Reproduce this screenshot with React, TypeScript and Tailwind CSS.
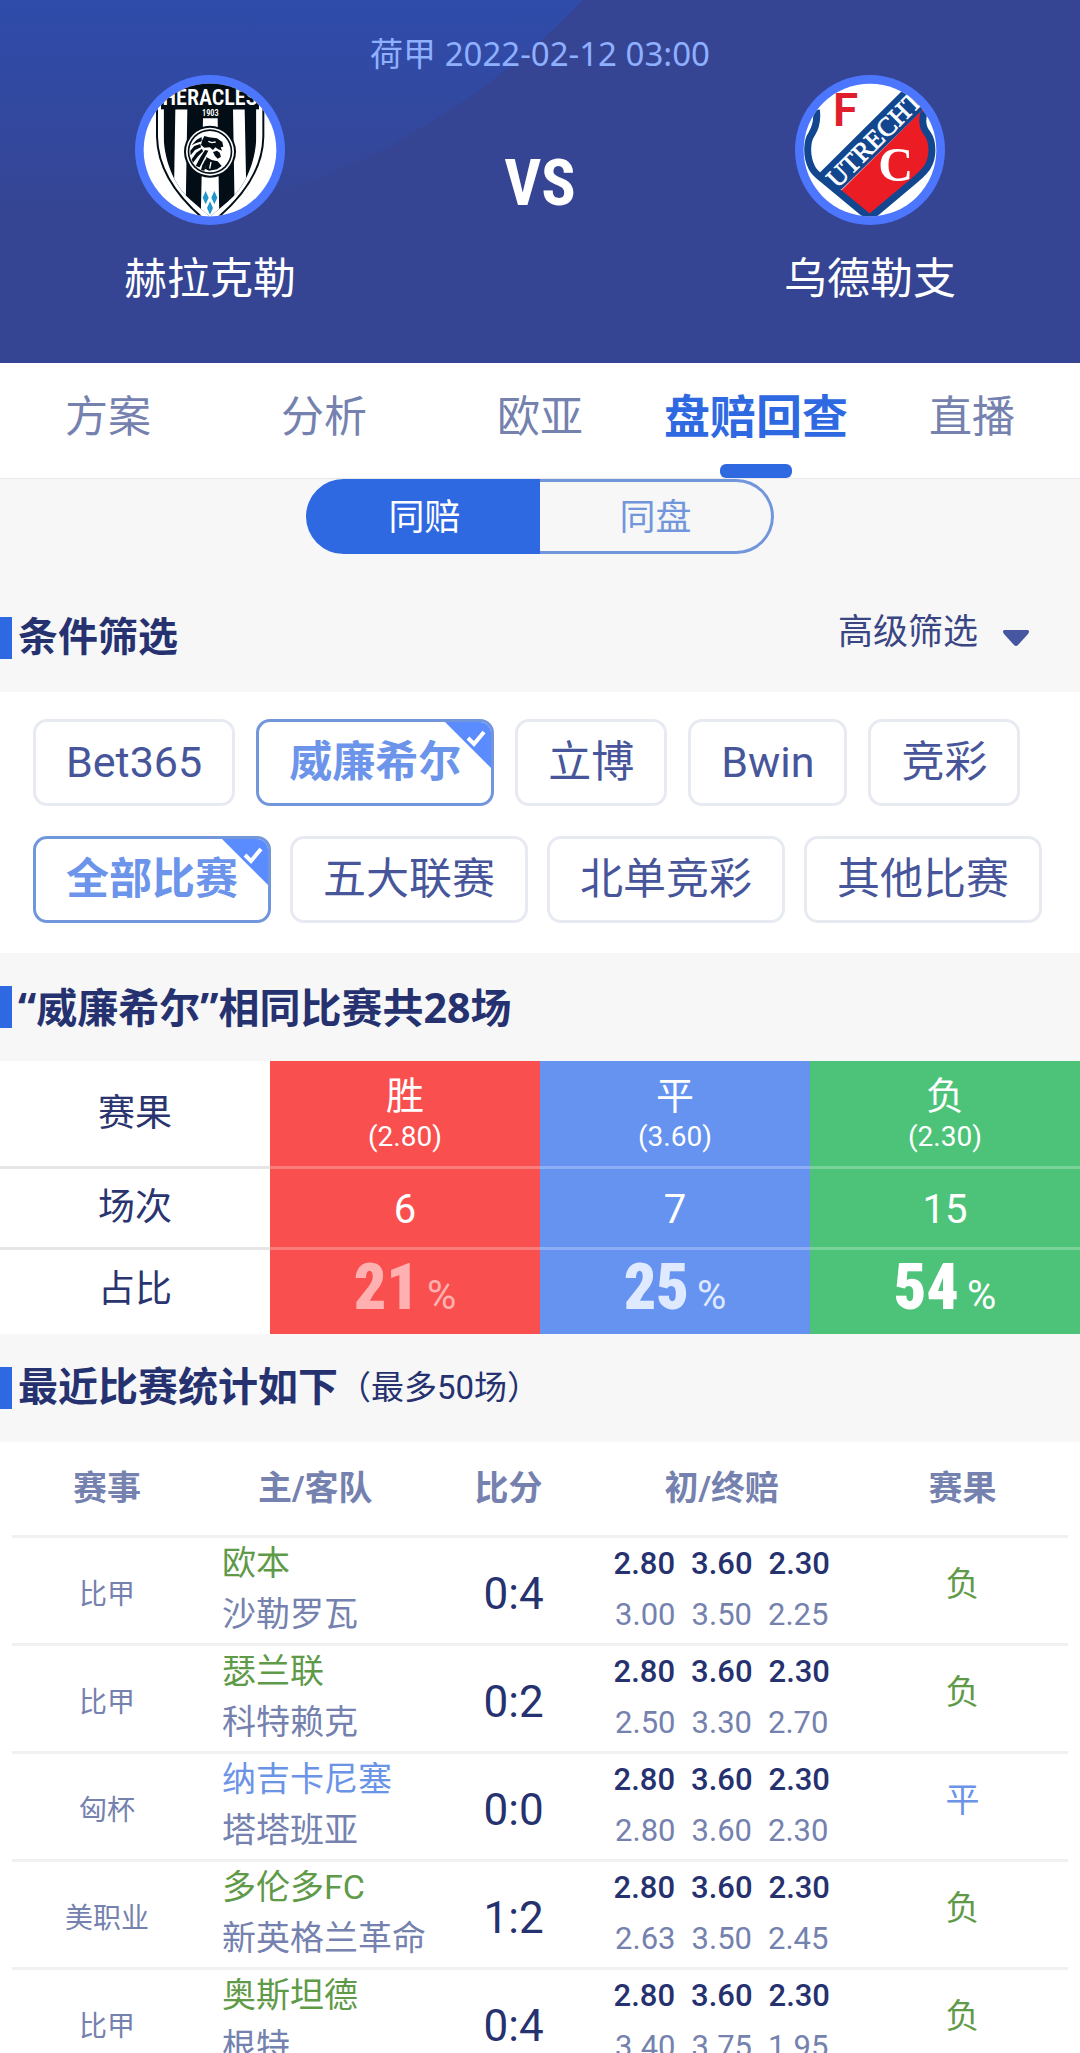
/**
 * MatchOddsScreen — odds lookup tab of the match detail page.
 *
 *   [ header: league / kick-off, two teams    ]
 *   [ tabs                                    ]
 *   [ same odds | same handicap               ]
 *   [ filters                                 ]
 *   [ summary table                           ]
 *   [ recent matches table                    ]
 */
import { useState } from 'react';
import clsx from 'clsx';

const TABS = ['方案', '分析', '欧亚', '盘赔回查', '直播'];
const MODES = ['同赔', '同盘'];
const BOOKMAKERS = ['Bet365', '威廉希尔', '立博', 'Bwin', '竞彩'];
const SCOPES = ['全部比赛', '五大联赛', '北单竞彩', '其他比赛'];

type Result = '胜' | '平' | '负';

const RESULT_COLOR: Record<Result, string> = {
  胜: 'text-[#f9504f]',
  平: 'text-[#6b94e6]',
  负: 'text-[#5f9a48]',
};

const SUMMARY = [
  { name: '胜', odds: '(2.80)', count: 6, rate: 21, bg: 'bg-[#f9504f]', tone: 'text-[#ffb1b1]' },
  { name: '平', odds: '(3.60)', count: 7, rate: 25, bg: 'bg-[#6793f0]', tone: 'text-[#dfe9ff]' },
  { name: '负', odds: '(2.30)', count: 15, rate: 54, bg: 'bg-[#4dc379]', tone: 'text-white' },
];

interface Match {
  league: string;
  home: string;
  away: string;
  score: string;
  first: string[];
  last: string[];
  result: Result;
}

const OPENING = ['2.80', '3.60', '2.30'];

const MATCHES: Match[] = [
  { league: '比甲', home: '欧本', away: '沙勒罗瓦', score: '0:4', first: OPENING, last: ['3.00', '3.50', '2.25'], result: '负' },
  { league: '比甲', home: '瑟兰联', away: '科特赖克', score: '0:2', first: OPENING, last: ['2.50', '3.30', '2.70'], result: '负' },
  { league: '匈杯', home: '纳吉卡尼塞', away: '塔塔班亚', score: '0:0', first: OPENING, last: ['2.80', '3.60', '2.30'], result: '平' },
  { league: '美职业', home: '多伦多FC', away: '新英格兰革命', score: '1:2', first: OPENING, last: ['2.63', '3.50', '2.45'], result: '负' },
  { league: '比甲', home: '奥斯坦德', away: '根特', score: '0:4', first: OPENING, last: ['3.40', '3.75', '1.95'], result: '负' },
];

function HeraclesLogo() {
  return (
    <svg viewBox="42 45 450 450" className="size-[150px]" aria-hidden="true">
      <defs>
        <clipPath id="heracles-round">
          <circle cx="267" cy="270" r="199" />
        </clipPath>
        <clipPath id="heracles-shield">
          <path d="M128 60V230C130 310 165 385 215 425L267 470L320 425C370 385 404 310 406 230V60Z" />
        </clipPath>
      </defs>
      <circle cx="267" cy="270" r="225" fill="#4d76ff" />
      <g clipPath="url(#heracles-round)">
        <rect x="42" y="45" width="450" height="450" fill="#fff" />
        <path d="M108 60V230C110 330 170 410 246 475H288C365 410 425 330 427 230V60Z" fill="#fff" stroke="#020d16" strokeWidth="6" />
        <g clipPath="url(#heracles-shield)">
          <rect x="100" y="45" width="330" height="440" fill="#020d16" />
          <path d="M163 148H199L194 450H158ZM336 148H371L377 450H341ZM246 175H290L295 480H239Z" fill="#fff" />
        </g>
        <rect x="120" y="60" width="294" height="88" fill="#020d16" />
        <text x="267" y="134" textAnchor="middle" fill="#fff" fontSize="66" fontWeight="600" fontFamily="'Liberation Sans Narrow', 'Roboto Condensed', Roboto, sans-serif">
          HERACLES
        </text>
        <text x="268" y="167" textAnchor="middle" fill="#fff" fontSize="25" fontWeight="600" fontFamily="'Liberation Sans Narrow', 'Roboto Condensed', Roboto, sans-serif">
          1903
        </text>
        <circle cx="267" cy="275" r="78" fill="#020d16" />
        <circle cx="267" cy="275" r="72" fill="#fff" />
        <circle cx="267" cy="275" r="67" fill="#020d16" />
        <circle cx="267" cy="275" r="62" fill="#fff" />
        <g fill="#020d16">
          <path d="M244 240L250 228L264 232L288 235L304 246L307 260L299 262L303 272L292 268L283 262L276 270L266 262L250 263L240 255Z" />
          <path d="M276 276L288 272L296 278L300 290L290 296L282 288Z" />
          <path d="M256 291L272 300L290 304L302 318L288 328L264 332L252 326Z" />
          <path d="M242 231L226 240L212 256L224 250L242 244Z" />
          <path d="M238 252L220 258L208 272L209 286L222 270L240 262Z" />
          <path d="M243 266L226 278L212 298L216 308L232 288L246 274Z" />
          <path d="M252 270L238 292L224 318L236 322L246 302L262 272Z" />
          <path d="M254 296L244 316L240 330L250 332L256 312Z" />
        </g>
        <path d="M262 244L272 248L284 246M270 306L266 326" fill="none" stroke="#fff" strokeWidth="4" />
        <path d="M254 393L263 413L254 433L245 413ZM280 393L289 413L280 433L271 413ZM267 424L276 444L267 464L258 444Z" fill="#2196cc" />
      </g>
    </svg>
  );
}

function UtrechtLogo() {
  return (
    <svg viewBox="48 45 450 450" className="size-[150px]" aria-hidden="true">
      <defs>
        <clipPath id="utrecht-round">
          <circle cx="273" cy="270" r="199" />
        </clipPath>
        <clipPath id="utrecht-shield">
          <path d="M112 40V140C114 175 112 200 98 222C86 240 82 290 98 322C106 340 125 352 140 365L272 472L410 358C425 345 437 335 446 320C464 290 460 240 446 222C432 205 426 185 438 150V40Z" />
        </clipPath>
      </defs>
      <circle cx="273" cy="270" r="225" fill="#4d76ff" />
      <g clipPath="url(#utrecht-round)">
        <rect x="48" y="45" width="450" height="450" fill="#fff" />
        <g clipPath="url(#utrecht-shield)">
          <path d="M180 398L450 130V500H272Z" fill="#ec1c24" />
          <path d="M110 350L400 62L480 102L188 388L150 400Z" fill="#12468f" />
        </g>
        <path d="M112 150C116 180 112 200 98 222C82 245 82 290 98 322C106 340 125 352 140 365L272 474L410 358C425 345 437 335 446 320C464 290 462 245 446 222C432 205 426 185 436 156" fill="none" stroke="#12468f" strokeWidth="21" />
        <text x="0" y="0" transform="translate(175 387) rotate(-45)" fill="#fff" fontSize="80" fontWeight="400" stroke="#fff" strokeWidth="2" fontFamily="'Liberation Serif', serif">
          UTRECHT
        </text>
        <text x="160" y="197" fill="#e01f2d" fontSize="139" fontWeight="700" fontFamily="Lato, sans-serif">
          F
        </text>
        <text x="298" y="362" fill="#fff" fontSize="145" fontWeight="700" fontFamily="'Liberation Serif', serif">
          C
        </text>
      </g>
    </svg>
  );
}

function Team({ name, logo }: { name: string; logo: React.ReactNode }) {
  return (
    <div className="flex flex-1 flex-col items-center">
      {logo}
      <span className="mt-[22px] text-[43px] leading-[64px] text-white">{name}</span>
    </div>
  );
}

function MatchHeader() {
  return (
    <header className="relative overflow-hidden bg-[#354594] pt-8 pb-[52px]">
      <svg className="absolute top-0 left-0 h-[240px] w-[800px]" viewBox="0 0 800 240" aria-hidden="true">
        <defs>
          <linearGradient id="header-glow" gradientUnits="userSpaceOnUse" x1="0" y1="0" x2="0" y2="210">
            <stop offset="0" stopColor="#2f4cab" />
            <stop offset="1" stopColor="#354594" />
          </linearGradient>
        </defs>
        <circle cx="43" cy="-515" r="746" fill="url(#header-glow)" />
      </svg>
      <div className="relative">
        <p className="text-center font-['Noto_Sans','Noto_Sans_CJK_SC',sans-serif] text-[33px] leading-[43px] text-[#8fb0ff]">
          荷甲 2022-02-12 03:00
        </p>
        <div className="flex">
          <Team name="赫拉克勒" logo={<HeraclesLogo />} />
          <div className="mt-[68px] w-[240px] text-center font-['Liberation_Sans_Narrow','Roboto_Condensed',Roboto,sans-serif] text-[64px] leading-[82px] font-bold text-white">
            VS
          </div>
          <Team name="乌德勒支" logo={<UtrechtLogo />} />
        </div>
      </div>
    </header>
  );
}

function SectionTitle({ children }: { children: React.ReactNode }) {
  return (
    <h2 className="flex items-center text-[40px] leading-[42px] font-bold text-[#263270]">
      <span className="mr-1.5 h-[42px] w-3 bg-[#2f69e2]" />
      {children}
    </h2>
  );
}

interface ChipProps {
  label: string;
  selected: boolean;
  onClick: () => void;
}

function Chip({ label, selected, onClick }: ChipProps) {
  return (
    <button
      type="button"
      aria-pressed={selected}
      onClick={onClick}
      className={clsx(
        'relative h-[87px] overflow-hidden rounded-[14px] border-3 px-[30px] text-[43px] leading-[81px]',
        selected ? 'border-[#7296dc] font-bold text-[#6b94ea]' : 'border-[#e7eaf1] text-[#47569a]',
      )}
    >
      {label}
      {selected && (
        <svg viewBox="0 0 46 46" className="absolute top-0 right-0 size-[46px]" aria-hidden="true">
          <path d="M0 0H46V46Z" fill="#5b8cff" />
          <path d="M23 16L29 22L39 10" fill="none" stroke="#fff" strokeWidth="4" />
        </svg>
      )}
    </button>
  );
}

function Filters() {
  const [bookmaker, setBookmaker] = useState('威廉希尔');
  const [scope, setScope] = useState('全部比赛');

  return (
    <div className="flex flex-col gap-[30px] bg-white px-[33px] pt-[27px] pb-[30px]">
      <div className="flex gap-[21px]">
        {BOOKMAKERS.map((b) => (
          <Chip key={b} label={b} selected={b === bookmaker} onClick={() => { setBookmaker(b); }} />
        ))}
      </div>
      <div className="flex gap-[19px]">
        {SCOPES.map((s) => (
          <Chip key={s} label={s} selected={s === scope} onClick={() => { setScope(s); }} />
        ))}
      </div>
    </div>
  );
}

function SummaryTable() {
  return (
    <table className="w-full table-fixed border-separate border-spacing-0 text-center">
      <tbody className="text-white">
        <tr className="h-[108px]">
          <th scope="row" className="border-b-3 border-[#e6e6e6] bg-white text-[37px] font-normal text-[#2a3570]">赛果</th>
          {SUMMARY.map((s) => (
            <td key={s.name} className={clsx('border-b-3 border-white/25', s.bg)}>
              <div className="text-[38px] leading-[46px]">{s.name}</div>
              <div className="text-[28px] leading-9">{s.odds}</div>
            </td>
          ))}
        </tr>
        <tr className="h-[81px]">
          <th scope="row" className="border-b-3 border-[#e6e6e6] bg-white text-[37px] font-normal text-[#2a3570]">场次</th>
          {SUMMARY.map((s) => (
            <td key={s.name} className={clsx('border-b-3 border-white/25 pt-1 text-[40px]', s.bg)}>{s.count}</td>
          ))}
        </tr>
        <tr className="h-[84px]">
          <th scope="row" className="bg-white pb-1 text-[37px] font-normal text-[#2a3570]">占比</th>
          {SUMMARY.map((s) => (
            <td key={s.name} className={clsx(s.bg, s.tone)}>
              <div className="flex items-baseline justify-center gap-2 leading-[72px]">
                <span className="font-['Liberation_Sans_Narrow','Roboto_Condensed',Roboto,sans-serif] text-[64px] font-black">{s.rate}</span>
                <span className="text-[40px]">%</span>
              </div>
            </td>
          ))}
        </tr>
      </tbody>
    </table>
  );
}

function Odds({ values, className }: { values: string[]; className?: string }) {
  return (
    <div className={clsx('flex justify-center gap-4', className)}>
      {values.map((v, i) => (
        <span key={i}>{v}</span>
      ))}
    </div>
  );
}

function MatchTable() {
  return (
    <div className="bg-white px-3">
      <table className="w-full table-fixed border-separate border-spacing-0 text-center">
        <colgroup>
          <col className="w-[18%]" />
          <col className="w-[22%]" />
          <col className="w-[15%]" />
          <col className="w-[25%]" />
          <col className="w-[20%]" />
        </colgroup>
        <thead>
          <tr className="h-24 text-[34px] text-[#7581ae] [&>th]:border-b-3 [&>th]:border-[#f0f1f3]">
            <th scope="col">赛事</th>
            <th scope="col" className="pr-1.5">主/客队</th>
            <th scope="col" className="pr-2.5">比分</th>
            <th scope="col" className="pr-1.5">初/终赔</th>
            <th scope="col">赛果</th>
          </tr>
        </thead>
        <tbody>
          {MATCHES.map((m) => (
            <tr key={m.home} className="h-[108px] text-[#7581ae] [&>td]:border-b-3 [&>td]:border-[#f0f1f3]">
              <td className="pt-2 text-[28px]">{m.league}</td>
              <td className="pl-5 text-left align-top text-[34px] leading-[51px] whitespace-nowrap">
                <div className={RESULT_COLOR[m.result]}>{m.home}</div>
                <div>{m.away}</div>
              </td>
              <td className="pt-1.5 text-[44px] text-[#263270]">{m.score}</td>
              <td className="pr-1.5 align-top text-[31px] leading-[51px]">
                <Odds values={m.first} className="font-medium text-[#263270]" />
                <Odds values={m.last} />
              </td>
              <td className={clsx('pb-3 text-[34px]', RESULT_COLOR[m.result])}>{m.result}</td>
            </tr>
          ))}
        </tbody>
      </table>
    </div>
  );
}

export default function App() {
  const [tab, setTab] = useState('盘赔回查');
  const [mode, setMode] = useState('同赔');

  return (
    <div className="h-screen overflow-y-auto bg-[#f7f7f8] font-[Roboto,'Noto_Sans_CJK_SC',sans-serif] [scrollbar-width:none]">
      <MatchHeader />

      <nav className="flex h-[116px] border-b border-[#e8e8ea] bg-white">
        {TABS.map((t) => (
          <button
            key={t}
            type="button"
            onClick={() => { setTab(t); }}
            className={clsx(
              'relative flex-1 basis-0 pb-1.5 whitespace-nowrap',
              t === tab ? 'text-[46px] font-bold text-[#2f69e2]' : 'text-[43px] text-[#7581ae]',
            )}
          >
            {t}
            {t === tab && (
              <span className="absolute bottom-0 left-1/2 h-[14px] w-[72px] -translate-x-1/2 rounded-[6px] bg-[#2f69e2]" />
            )}
          </button>
        ))}
      </nav>

      <div className="mx-auto flex h-[75px] w-[468px]">
        {MODES.map((m) => (
          <button
            key={m}
            type="button"
            aria-pressed={m === mode}
            onClick={() => { setMode(m); }}
            className={clsx(
              'flex-1 border-3 pt-0.5 text-[36px] first:rounded-l-full first:border-r-0 last:rounded-r-full last:border-l-0',
              m === mode ? 'border-[#2f69e2] bg-[#2f69e2] text-white' : 'border-[#7296dc] text-[#7296dc]',
            )}
          >
            {m}
          </button>
        ))}
      </div>

      <div className="flex items-center justify-between pt-[63px] pb-[33px]">
        <SectionTitle>条件筛选</SectionTitle>
        <button type="button" className="mr-[50px] flex h-[42px] items-center gap-6 text-[35px] text-[#3a4683]">
          <span className="pb-2.5">高级筛选</span>
          <svg viewBox="0 0 28 18" className="h-[18px] w-7" aria-hidden="true">
            <path d="M2 1H26Q28 2 26 5L16 16Q14 18 12 16L2 5Q0 2 2 1Z" fill="#4656a0" />
          </svg>
        </button>
      </div>
      <Filters />

      <div className="py-[33px]">
        <SectionTitle>
          <span className="font-['Noto_Sans','Noto_Sans_CJK_SC',sans-serif] text-[41px]">“威廉希尔”相同比赛共28场</span>
        </SectionTitle>
      </div>
      <SummaryTable />

      <div className="py-[33px]">
        <SectionTitle>
          最近比赛统计如下
          <span className="text-[33px] font-normal">（最多50场）</span>
        </SectionTitle>
      </div>
      <MatchTable />
    </div>
  );
}
